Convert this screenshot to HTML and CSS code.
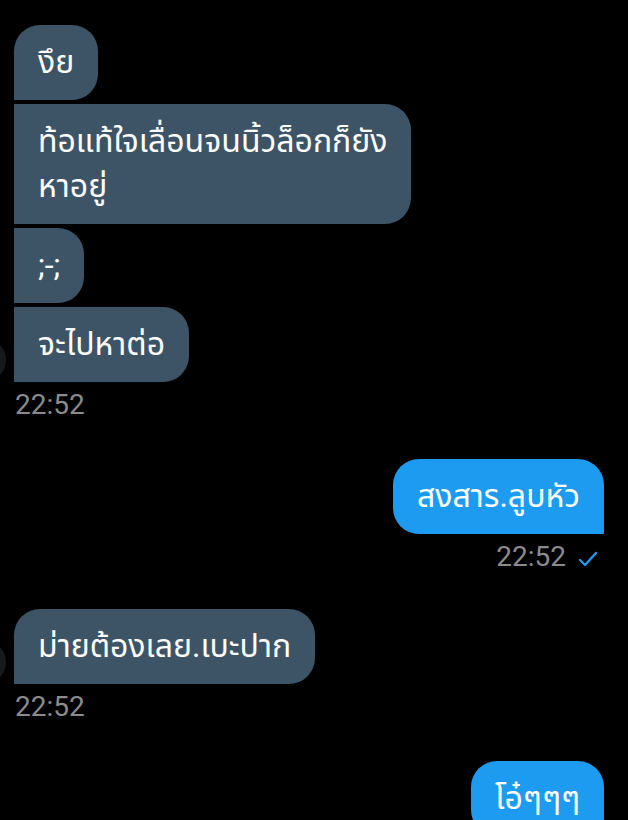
FILE: index.html
```html
<!DOCTYPE html>
<html>
<head>
<meta name="viewport" content="width=device-width, initial-scale=1">
<link rel="stylesheet" href="styles.css">
</head>
<body>

<div class="chat">

    <!-- their messages -->
    <div class="group left">
        <div class="avatar"></div>
        <div class="bubble first">งึย</div>
        <div class="bubble">ท้อแท้ใจเลื่อนจนนิ้วล็อกก็ยัง<br>หาอยู่</div>
        <div class="bubble">;-;</div>
        <div class="bubble">จะไปหาต่อ</div>
        <div class="time">22:52</div>
    </div>

    <!-- my message -->
    <div class="group right">
        <div class="bubble mine">สงสาร.ลูบหัว</div>
        <div class="time">22:52
            <svg class="check" width="20" height="16" viewBox="0 0 20 16">
                <path d="M2 9 L7 14 L18 2" fill="none" stroke="#1d9bf0" stroke-width="2.4" stroke-linecap="round" stroke-linejoin="round"/>
            </svg>
        </div>
    </div>

    <div class="group left">
        <div class="avatar"></div>
        <div class="bubble first">ม่ายต้องเลย.เบะปาก</div>
        <div class="time">22:52</div>
    </div>

    <div class="group right">
        <div class="bubble mine">โอ๋ๆๆๆ</div>
    </div>

</div>

</body>
</html>
```

FILE: styles.css
```css
* {
    box-sizing: border-box;
}

body {
    margin: 0;
    background: #000;
    font-family: Roboto, "Noto Sans", "Noto Sans Thai", sans-serif;
    overflow: hidden;
}

.chat {
    display: flex;
    flex-direction: column;
    padding-top: 25px;
}

.group {
    position: relative;
    display: flex;
    flex-direction: column;
    gap: 4px;
}

.group.left {
    align-items: flex-start;
    padding-left: 14px;
    margin-bottom: 39px;
}

.group.right {
    align-items: flex-end;
    padding-right: 24px;
    margin-bottom: 37px;
}

/* avatar mostly hidden past the left edge */
.avatar {
    position: absolute;
    left: -38px;
    bottom: 38px;
    width: 44px;
    height: 44px;
    border-radius: 50%;
    background: #161a1d;
}

.bubble {
    background: #3d5466;
    color: #fff;
    font-size: 32px;
    line-height: 45px;
    padding: 15px 24px;
    border-radius: 0 26px 26px 0;
}

.bubble.first {
    border-radius: 26px 26px 26px 0;
}

.bubble.mine {
    background: #1d9bf0;
    border-radius: 26px 26px 0 26px;
}

.time {
    color: #8b8b8b;
    font-size: 28px;
    line-height: 30px;
    margin-top: 4px;
    padding-left: 1px;
    display: flex;
    align-items: center;
    gap: 12px;
}

.right .time {
    margin-right: 6px;
}

.check {
    margin-top: 4px;
}
```
